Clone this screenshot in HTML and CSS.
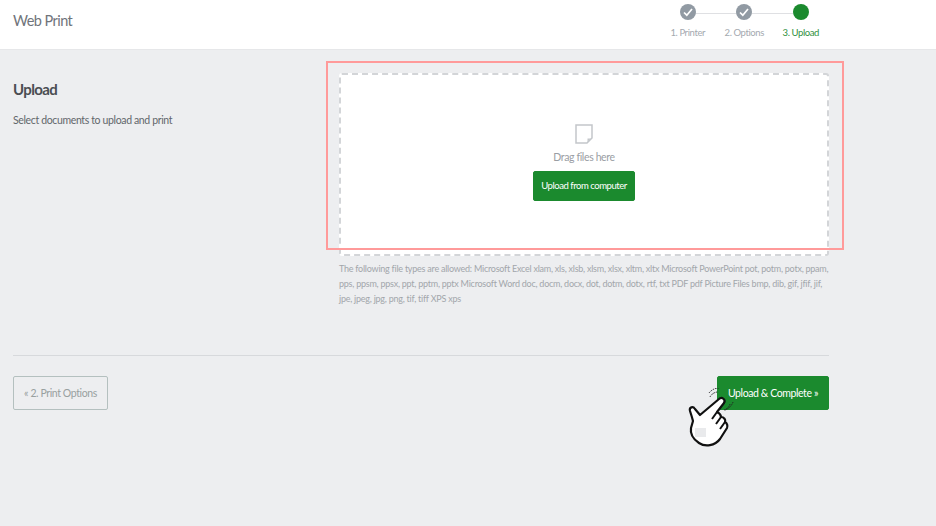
FILE: index.html
```html
<!DOCTYPE html>
<html lang="en">
<head>
    <meta charset="UTF-8">
    <title>Web Print</title>
    <link rel="stylesheet" href="styles.css">
</head>
<body>
    <!-- Header -->
    <header class="top-bar">
        <div class="page-title">Web Print</div>
        <div class="steps">
            <div class="step">
                <span class="step-dot done">
                    <svg width="12" height="12" viewBox="0 0 12 12"><path d="M2 6.5 L4.8 9.2 L10 3" fill="none" stroke="#fff" stroke-width="1.7"/></svg>
                </span>
                <span class="step-label">1. Printer</span>
            </div>
            <div class="step">
                <span class="step-dot done">
                    <svg width="12" height="12" viewBox="0 0 12 12"><path d="M2 6.5 L4.8 9.2 L10 3" fill="none" stroke="#fff" stroke-width="1.7"/></svg>
                </span>
                <span class="step-label">2. Options</span>
            </div>
            <div class="step current">
                <span class="step-dot"></span>
                <span class="step-label">3. Upload</span>
            </div>
        </div>
    </header>

    <!-- Upload Section -->
    <main class="content">
        <div class="upload-row">
            <div class="intro">
                <h2>Upload</h2>
                <p>Select documents to upload and print</p>
            </div>
            <div class="upload-col">
                <div class="dropzone">
                    <svg class="file-icon" width="18" height="20" viewBox="0 0 18 20">
                        <path d="M1 1 H17 V14 L12 19 H1 Z" fill="none" stroke="#c3c6ca" stroke-width="1.5"/>
                        <path d="M16 14.5 H12.5 V18 Z" fill="#c3c6ca"/>
                    </svg>
                    <div class="drag-text">Drag files here</div>
                    <a href="#" class="btn btn-green btn-small">Upload from computer</a>
                </div>
                <p class="file-types">The following file types are allowed: Microsoft Excel xlam, xls, xlsb, xlsm, xlsx, xltm, xltx Microsoft PowerPoint pot, potm, potx, ppam, pps, ppsm, ppsx, ppt, pptm, pptx Microsoft Word doc, docm, docx, dot, dotm, dotx, rtf, txt PDF pdf Picture Files bmp, dib, gif, jfif, jif, jpe, jpeg, jpg, png, tif, tiff XPS xps</p>
            </div>
        </div>

        <div class="actions">
            <a href="#" class="btn btn-outline">« 2. Print Options</a>
            <a href="#" class="btn btn-green">Upload &amp; Complete »</a>
        </div>
    </main>

    <!-- Annotations over the page -->
    <div class="highlight-box"></div>
    <svg class="hand" width="52" height="62" viewBox="0 0 52 62">
        <path d="M24 9 A9 9 0 0 1 32 4" fill="none" stroke="#222" stroke-width="1" stroke-dasharray="1.5 1"/>
        <path d="M23 5 A13 13 0 0 1 34 0" fill="none" stroke="#222" stroke-width="1" stroke-dasharray="1.5 1"/>
        <path d="M44 16 A9 9 0 0 1 38 22" fill="none" stroke="#222" stroke-width="1" stroke-dasharray="1.5 1"/>
        <path d="M47 14 A13 13 0 0 1 39 22" fill="none" stroke="#222" stroke-width="1" stroke-dasharray="1.5 1"/>
        <path d="M33 11 C36 8 40 12 38 15 L31 24 C33 25 35 27 35 29 C38 29 40 32 39 34 C41 35 42 38 41 40 L34 51 C29 58 19 59 13 55 C7 51 4 46 5 40 L7 33 C6 29 5 26 4 23 C3 19 7 18 9 21 L14 27 Z" fill="#fff" stroke="#111" stroke-width="2.2" stroke-linejoin="round"/>
        <path d="M26 31 L31 24 M30 36 L35 29 M34 41 L39 34" fill="none" stroke="#111" stroke-width="2"/>
        <rect x="9" y="40" width="11" height="9" fill="#e9eaec"/>
    </svg>
</body>
</html>
```

FILE: styles.css
```css
* {
    margin: 0;
    padding: 0;
    box-sizing: border-box;
}

body {
    font-family: 'Lato', sans-serif;
    background-color: #edeef0;
    color: #555;
    height: 526px;
    overflow: hidden;
    position: relative;
}

/* Header */
.top-bar {
    height: 50px;
    background: #fff;
    border-bottom: 1px solid #e6e7e9;
    display: flex;
    justify-content: space-between;
    padding: 0 107px 0 13px;
}

.page-title {
    font-size: 14.5px;
    letter-spacing: -0.55px;
    line-height: 42px;
    color: #70747a;
}

.steps {
    display: flex;
    padding-top: 4px;
}

.step {
    width: 56.5px;
    display: flex;
    flex-direction: column;
    align-items: center;
    position: relative;
}

.step:not(:last-child)::after {
    content: "";
    position: absolute;
    top: 9px;
    left: 50%;
    width: 100%;
    height: 1px;
    background: #dfe0e3;
}

.step-dot {
    width: 16px;
    height: 16px;
    border-radius: 50%;
    background: #919aa3;
    display: flex;
    align-items: center;
    justify-content: center;
    position: relative;
    z-index: 1;
}

.step-label {
    font-size: 9.5px;
    letter-spacing: -0.4px;
    line-height: 14px;
    margin-top: 6px;
    color: #a4a9af;
    white-space: nowrap;
}

.current .step-dot {
    background: #1b8a2e;
}

.current .step-label {
    color: #2f9140;
}

/* Upload Section */
.content {
    width: 829px;
    padding: 23px 0 0 13px;
}

.upload-row {
    display: flex;
    height: 283px;
    border-bottom: 1px solid #d7d9dc;
}

.intro {
    width: 326px;
}

.intro h2 {
    font-size: 15px;
    letter-spacing: -0.6px;
    line-height: 32px;
    font-weight: 700;
    color: #4a4d52;
}

.intro p {
    font-size: 10.5px;
    letter-spacing: -0.36px;
    line-height: 14px;
    margin-top: 8px;
    color: #62666b;
}

.upload-col {
    flex: 1;
}

.dropzone {
    height: 183px;
    background: #fff;
    border: 2px dashed #d3d5d8;
    border-radius: 3px;
    display: flex;
    flex-direction: column;
    align-items: center;
    padding-top: 49px;
}

.drag-text {
    font-size: 10.5px;
    letter-spacing: -0.37px;
    line-height: 16px;
    margin-top: 5px;
    color: #9a9ea4;
}

.file-types {
    font-size: 9px;
    letter-spacing: -0.24px;
    line-height: 15px;
    margin-top: 5px;
    color: #a2a6ab;
}

/* Buttons */
.btn {
    display: inline-block;
    height: 34px;
    line-height: 32px;
    padding: 0 10px;
    font-size: 10.5px;
    letter-spacing: -0.4px;
    border-radius: 2px;
    text-decoration: none;
    white-space: nowrap;
}

.btn-green {
    background: #1b8a2e;
    border: 1px solid #1b8a2e;
    color: #fff;
}

.btn-small {
    height: 30px;
    line-height: 28px;
    margin-top: 6px;
    font-size: 9.5px;
    letter-spacing: -0.45px;
    padding: 0 7px;
}

.btn-outline {
    border: 1px solid #b4c0bf;
    color: #98a09f;
}

.actions {
    display: flex;
    justify-content: space-between;
    padding-top: 20px;
}

/* Annotations */
.highlight-box {
    position: absolute;
    left: 326px;
    top: 61px;
    width: 518px;
    height: 189px;
    border: 2px solid #ff9a9a;
}

.hand {
    position: absolute;
    left: 686px;
    top: 388px;
}
```
